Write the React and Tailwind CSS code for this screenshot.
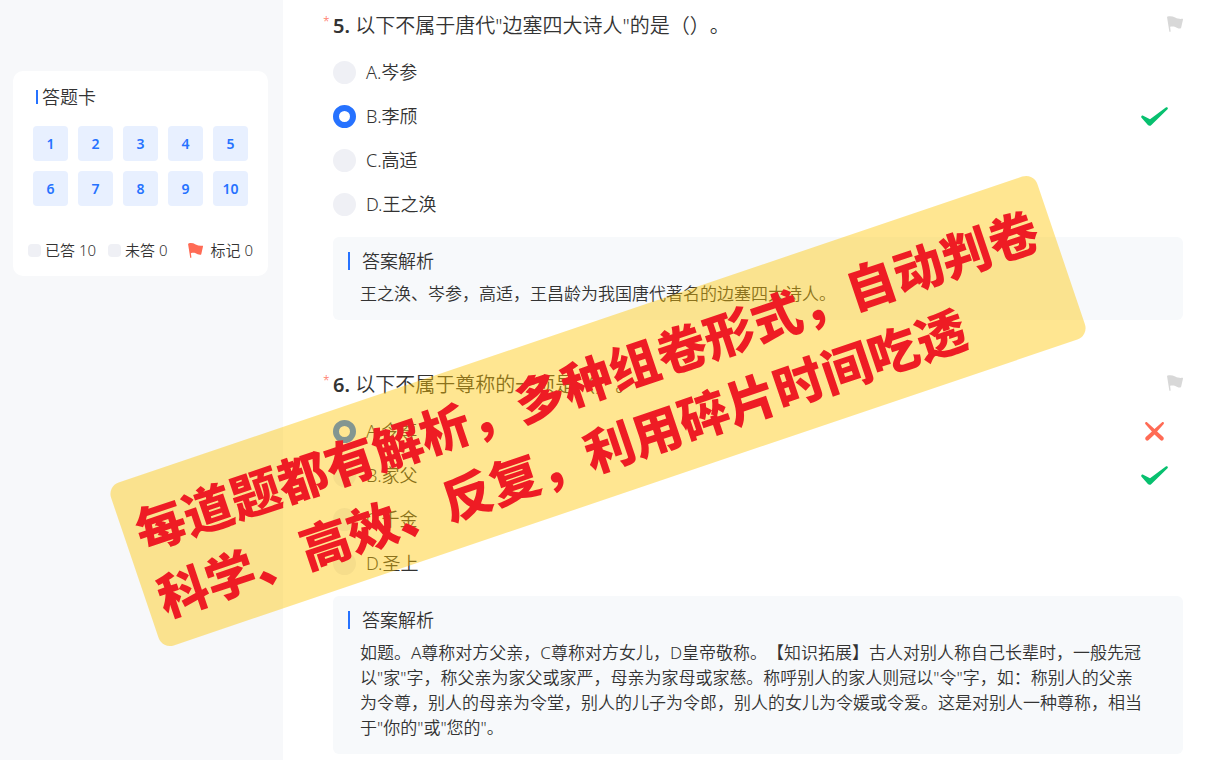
const answerNumbers = [1, 2, 3, 4, 5, 6, 7, 8, 9, 10];

const questions = [
  {
    id: 5,
    title: '以下不属于唐代"边塞四大诗人"的是（）。',
    options: ["A.岑参", "B.李颀", "C.高适", "D.王之涣"],
    selected: 1,
    marks: { 1: "right" },
    analysis: "王之涣、岑参，高适，王昌龄为我国唐代著名的边塞四大诗人。",
  },
  {
    id: 6,
    title: "以下不属于尊称的一项是（）。",
    options: ["A.令尊", "B.家父", "C.千金", "D.圣上"],
    selected: 0,
    marks: { 0: "wrong", 1: "right" },
    analysis:
      '如题。A尊称对方父亲，C尊称对方女儿，D皇帝敬称。【知识拓展】古人对别人称自己长辈时，一般先冠以"家"字，称父亲为家父或家严，母亲为家母或家慈。称呼别人的家人则冠以"令"字，如：称别人的父亲为令尊，别人的母亲为令堂，别人的儿子为令郎，别人的女儿为令媛或令爱。这是对别人一种尊称，相当于"你的"或"您的"。',
  },
];

function Flag({ className }) {
  return (
    <svg viewBox="0 0 16 16" className={className} aria-hidden="true">
      <path
        fill="currentColor"
        d="M0.7 0.4C3.2 -0.2 5.8 0.2 8.2 1.5C10.6 2.8 13 3.1 15.4 2.8C15.9 2.8 16.1 3.1 16 3.6L14.2 11.6C14.1 12.3 13.6 12.7 12.9 12.6C11 12.6 9.6 11.8 8.2 11C6.4 10.3 4.8 10.4 3.1 10.8L3.6 15C3.7 16.1 2.5 16.3 2.3 15.2L0.1 1.4C0 0.8 0.2 0.5 0.7 0.4Z"
      />
    </svg>
  );
}

function Mark({ type }) {
  if (type === "right") {
    return (
      <svg viewBox="0 0 27 19" className="h-[19px] w-[27px] text-[#07c06f]" role="img" aria-label="正确">
        <path
          fill="currentColor"
          d="M0.3 10.4C-0.1 9.2 1 8.1 2.2 8.7L9 12.3L24.8 0.4C26.1 -0.4 27.5 1 26.5 2.3L10.4 18C9.3 19.1 8 19.1 6.9 18.1Z"
        />
      </svg>
    );
  }
  return (
    <svg viewBox="0 0 19 19" className="mr-1 size-[19px] text-[#ff6b55]" role="img" aria-label="错误">
      <path
        fill="currentColor"
        d="M0.4 0.4C0.9 -0.1 1.8 0 2.3 0.5L9.5 7L16.8 0.5C17.3 0 18.2 -0.1 18.7 0.4C19.1 0.9 19 1.7 18.5 2.2L12.1 9.4L18.2 15.1C19.9 16.9 17.5 19.7 15.6 18.3L9.5 12.5L3.4 18.3C1.5 19.7 -0.9 16.9 0.8 15.1L6.9 9.4L0.5 2.2C0 1.7 -0.1 0.9 0.4 0.4Z"
      />
    </svg>
  );
}

function AnswerCard() {
  return (
    <aside className="w-[283px] shrink-0 bg-[#f7f8fa] pt-[71px] pr-[15px] pl-[13px]">
      <section className="rounded-[10px] bg-white pt-3 pb-[14px]">
        <h2 className="ml-[23px] flex items-center gap-1 text-lg leading-7">
          <span className="h-[14px] w-[2px] bg-[#2672ff]" />
          答题卡
        </h2>
        <div className="mx-5 mt-[15px] grid grid-cols-5 gap-[10px]">
          {answerNumbers.map((n) => (
            <button
              key={n}
              type="button"
              className="h-[35px] rounded bg-[#e8f0ff] text-sm font-semibold text-[#2672ff]"
            >
              {n}
            </button>
          ))}
        </div>
        <div className="mt-8 flex items-center justify-between px-[15px] text-[15px] leading-6 whitespace-nowrap">
          <span className="flex items-center gap-1">
            <i className="size-[13px] rounded-sm bg-[#eff0f5]" />
            已答 10
          </span>
          <span className="flex items-center gap-1">
            <i className="size-[13px] rounded-sm bg-[#eff0f5]" />
            未答 0
          </span>
          <span className="ml-2 flex items-center gap-2">
            <Flag className="size-[15px] text-[#ff6b55]" />
            标记 0
          </span>
        </div>
      </section>
    </aside>
  );
}

function Question({ question }) {
  return (
    <section>
      <div className="flex h-12 items-center">
        <span className="-ml-[10px] w-[10px] pb-2 text-xs text-[#ff6b55]">*</span>
        <h2 className="flex-1 text-xl leading-7">
          <span className="font-semibold">{question.id}.</span> {question.title}
        </h2>
        <button type="button" aria-label="标记" className="pb-1 text-[#d8d8d8]">
          <Flag className="size-4" />
        </button>
      </div>
      <div>
        {question.options.map((option, i) => (
          <div key={option} className="flex h-11 items-center justify-between pr-[15px]">
            <label className="flex items-center gap-[10px] text-lg leading-7">
              <input
                type="radio"
                name={`question-${question.id}`}
                defaultChecked={i === question.selected}
                className="size-[23px] appearance-none rounded-full bg-[#eff0f5] checked:border-[6px] checked:border-[#2672ff] checked:bg-white"
              />
              {option}
            </label>
            {question.marks[i] && <Mark type={question.marks[i]} />}
          </div>
        ))}
      </div>
      <div className="mt-[11px] rounded-md bg-[#f7f9fb] pt-3 pr-9 pb-[14px] pl-[27px]">
        <h3 className="-ml-3 flex items-center gap-3 text-lg leading-6">
          <span className="h-[18px] w-[2px] bg-[#2672ff]" />
          答案解析
        </h3>
        <p className="mt-2 text-[17px] leading-[25px]">{question.analysis}</p>
      </div>
    </section>
  );
}

export default function App() {
  return (
    <div className="relative flex min-h-screen overflow-hidden bg-white font-['Noto_Sans','Noto_Sans_CJK_SC',sans-serif] font-[350] text-[#333333] [text-spacing-trim:space-all]">
      <AnswerCard />
      <main className="flex min-w-0 flex-1 flex-col gap-[41px] pt-[2px] pr-[45px] pb-[6px] pl-[50px]">
        {questions.map((q) => (
          <Question key={q.id} question={q} />
        ))}
      </main>
      <div className="absolute top-[325px] left-[109px] w-[978px] -rotate-[18.7deg] rounded-xl bg-[rgba(255,197,0,0.43)] px-[13px] py-4 font-['Noto_Sans_CJK_SC',sans-serif] text-[50px] leading-[70px] font-black whitespace-nowrap text-[#ee1c24]">
        <p>每道题都有解析，多种组卷形式，自动判卷</p>
        <p>科学、高效、反复，利用碎片时间吃透</p>
      </div>
    </div>
  );
}
